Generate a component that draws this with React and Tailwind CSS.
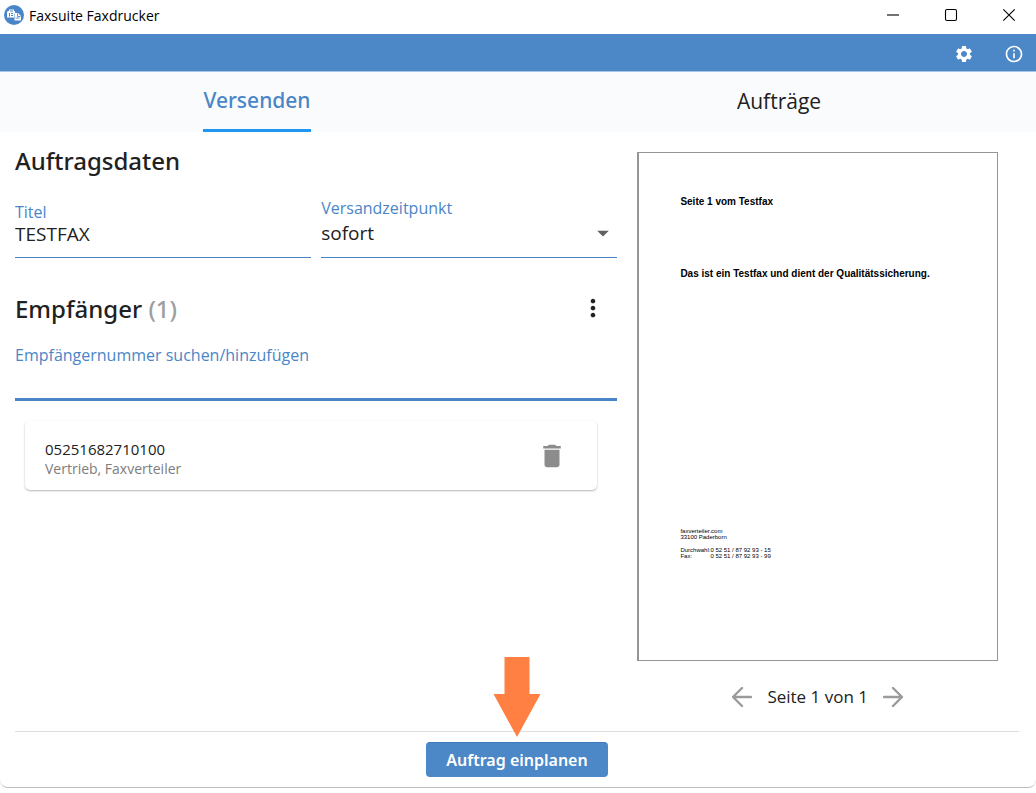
import { MdSettings, MdInfoOutline, MdMoreVert, MdDelete, MdArrowDropDown } from "react-icons/md";

function AppLogo() {
  return (
    <svg viewBox="0 0 20 20" className="size-5 shrink-0" aria-hidden="true">
      <circle cx="10" cy="10" r="10" fill="#4a86c7" />
      <path d="M4 6h1V4.5h5V6h1v1.5h.5L10 9v3.5H3V7z" fill="#fff" />
      <path d="M5 8h1v3.500H5zM7 8h2v1H7zM7 10h2v1H7zM6 5.500h3v1H6z" fill="#4a86c7" />
      <path d="M10.500 8h3.500l3 3v4.500h-6.500z" fill="#fff" />
      <path d="M13.500 8.500v3H16.500M11.500 13h4" stroke="#4a86c7" strokeWidth="0.9" fill="none" />
    </svg>
  );
}

function Arrow({ d }) {
  return (
    <svg viewBox="0 0 20 20" className="size-5" fill="none" stroke="#9b9b9b" strokeWidth="2.4" strokeLinecap="round" strokeLinejoin="round" aria-hidden="true">
      <path d={d} />
    </svg>
  );
}

function TitleBar() {
  return (
    <header className="flex h-[34px] items-center justify-between pl-1 text-black">
      <div className="flex h-full items-center gap-[5px] pb-1">
        <AppLogo />
        <h1 className="pt-px text-[14px] leading-5">Faxsuite Faxdrucker</h1>
      </div>
      <div className="flex h-full gap-[3px] pb-1">
        {[
          ["Minimieren", "M0 6h12"],
          ["Maximieren", "M2 .5h8a1.500 1.500 0 0 1 1.500 1.500v8a1.500 1.500 0 0 1-1.500 1.500H2A1.500 1.500 0 0 1 .5 10V2A1.500 1.500 0 0 1 2 .5z"],
          ["Schließen", "M.3 .3 11.700 11.700M11.700 .3 .3 11.700"],
        ].map(([label, d]) => (
          <button key={label} type="button" aria-label={label} className="flex h-full w-[55px] items-center justify-center">
            <svg viewBox="0 0 12 12" className="size-3 overflow-visible" fill="none" stroke="#000" strokeWidth="1.1">
              <path d={d} />
            </svg>
          </button>
        ))}
      </div>
    </header>
  );
}

function Preview() {
  return (
    <section aria-label="Vorschau" className="w-2/5 pt-5 pr-[21px] pl-5">
      <div className="flex aspect-[361/510] flex-col border border-l-2 border-[#959595] pt-[43px] pl-[41px] font-['Liberation_Sans',sans-serif] text-black">
        <p className="text-[10px] leading-3 font-bold">Seite 1 vom Testfax</p>
        <p className="mt-[60px] text-[10px] leading-3 font-bold">Das ist ein Testfax und dient der Qualitätssicherung.</p>
        <div className="mt-[248px] text-[6px] leading-[6px]">
          <p>faxverteiler.com</p>
          <p>33100 Paderborn</p>
          <dl className="mt-[7px] grid grid-cols-[30px_1fr]">
            <dt>Durchwahl:</dt>
            <dd>0 52 51 / 87 92 93 - 15</dd>
            <dt>Fax:</dt>
            <dd>0 52 51 / 87 92 93 - 99</dd>
          </dl>
        </div>
      </div>
      <nav aria-label="Seiten" className="mt-[22px] flex h-7 items-center justify-center gap-[15px]">
        <button type="button" aria-label="Vorherige Seite"><Arrow d="M19 10H1M10 1 1 10l9 9" /></button>
        <span className="text-[17px] leading-6 text-[#222]">Seite 1 von 1</span>
        <button type="button" aria-label="Nächste Seite"><Arrow d="M1 10h18M10 1l9 9-9 9" /></button>
      </nav>
    </section>
  );
}

export default function App() {
  return (
    <div className="bg-white font-['Open_Sans','Noto_Sans',sans-serif] text-[#212121]">
      <div className="rounded-b-lg border-b border-[#bdbdbd] pb-[10px]">
        <TitleBar />
        <div className="flex h-[38px] items-center justify-end gap-[30px] border-b border-[#a9c5e6] bg-[#4c87c7] pt-[3px] pr-3 text-white">
          <button type="button" aria-label="Einstellungen"><MdSettings className="size-5" /></button>
          <button type="button" aria-label="Info"><MdInfoOutline className="size-5" /></button>
        </div>

        <div role="tablist" className="grid h-[60px] grid-cols-2 gap-2 bg-[#fafbfd] text-[21px]">
          <button type="button" role="tab" aria-selected="true" className="justify-self-center border-b-[3px] border-[#2196f3] pt-px font-['Noto_Sans',sans-serif] font-medium text-[#4a86c7]">Versenden</button>
          <button type="button" role="tab" aria-selected="false" className="justify-self-center border-b-[3px] border-transparent pt-[2px]">Aufträge</button>
        </div>

        <main className="relative mr-[17px] ml-[15px]">
          <div className="flex border-b border-[#dedede] pb-5">
            <form className="w-3/5 pt-[9px]" onSubmit={(e) => e.preventDefault()}>
              <h2 className="font-['Noto_Sans',sans-serif] text-[24px] leading-10 font-medium">Auftragsdaten</h2>
              <div className="grid grid-cols-2 gap-[10px] pt-4">
                <div className="flex flex-col border-b border-[#4a86c7] pt-[5px] pb-[11px]">
                  <label htmlFor="title" className="text-[16px] leading-5 text-[#4a86c7]">Titel</label>
                  <input id="title" defaultValue="TESTFAX" className="h-6 w-full text-[19px] outline-none" />
                </div>
                <div className="relative flex flex-col border-b border-[#4a86c7] pt-px pb-3">
                  <label htmlFor="time" className="text-[16px] leading-5 text-[#4a86c7]">Versandzeitpunkt</label>
                  <select id="time" className="mt-[3px] h-6 w-full appearance-none text-[19px] leading-6 outline-none">
                    <option>sofort</option>
                  </select>
                  <MdArrowDropDown className="pointer-events-none absolute right-0 bottom-2.5 size-7 text-[#616161]" />
                </div>
              </div>

              <div className="mt-[31px] flex items-center justify-between pr-[10px]">
                <h2 className="font-['Noto_Sans',sans-serif] text-[24px] leading-10 font-medium">Empfänger <span className="text-[#9e9e9e]">(1)</span></h2>
                <button type="button" aria-label="Mehr" className="pb-[2px]"><MdMoreVert className="size-7" /></button>
              </div>
              <div className="mt-4 border-b-[3px] border-[#4a86c7]">
                <label htmlFor="search" className="block text-[16px] leading-5 text-[#4a86c7]">Empfängernummer suchen/hinzufügen</label>
                <input id="search" className="block h-[33px] w-full text-[19px] outline-none" />
              </div>
              <div className="mt-5 mr-5 ml-[10px] flex h-[69px] items-center justify-between rounded-[5px] pr-[30px] pl-5 shadow-[0_1px_2px_rgba(0,0,0,0.3)]">
                <div className="pt-[6px] leading-5">
                  <p className="text-[15px]">05251682710100</p>
                  <p className="text-[14px] text-[#7d7d7d]">Vertrieb, Faxverteiler</p>
                </div>
                <button type="button" aria-label="Empfänger löschen"><MdDelete className="size-[30px] text-[#8c8c8c]" /></button>
              </div>
            </form>
            <Preview />
          </div>

          <div className="flex justify-center pt-[10px]">
            <button type="button" className="h-[35px] rounded-[4px] border-t border-[#3f7abb] bg-[#4c87c7] px-5 font-['Noto_Sans',sans-serif] text-[16px] font-semibold text-white">Auftrag einplanen</button>
          </div>
          <svg viewBox="0 0 47 80" className="pointer-events-none absolute bottom-10 left-1/2 h-20 w-[47px] -translate-x-1/2" aria-hidden="true">
            <path d="M11 0h25v37h11L23.500 80 0 37h11z" fill="#ff8042" />
          </svg>
        </main>
      </div>
    </div>
  );
}
